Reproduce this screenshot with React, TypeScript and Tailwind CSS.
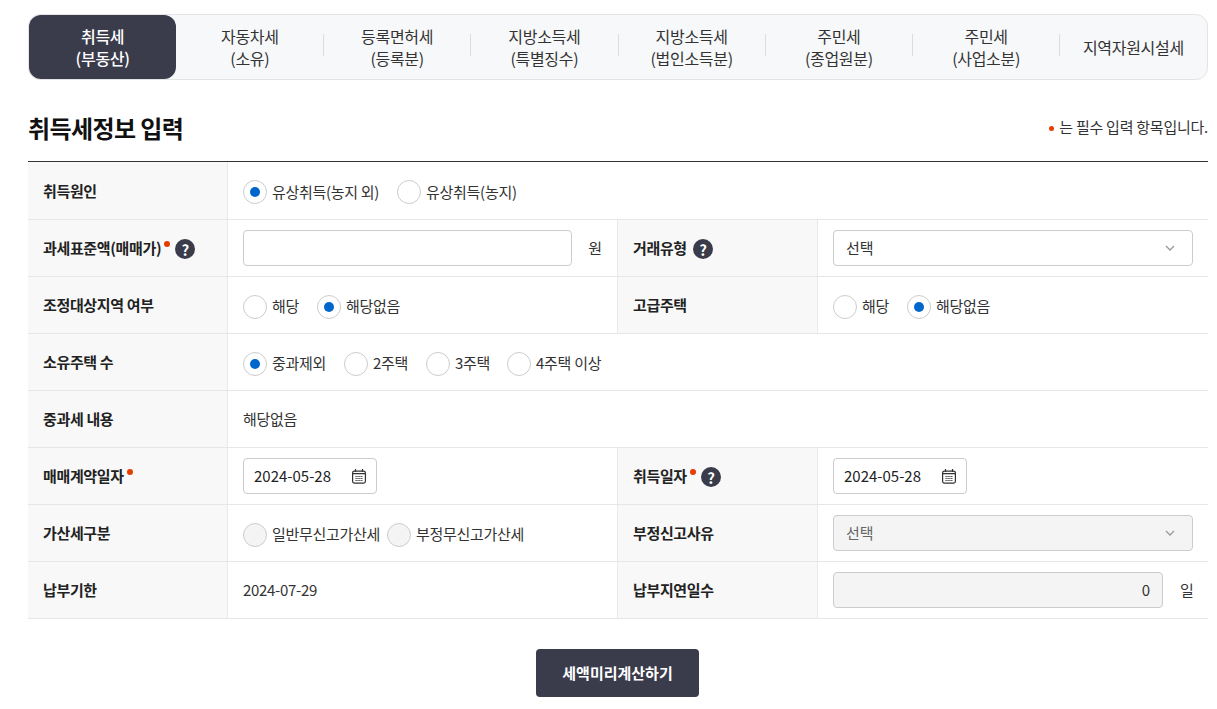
import React from "react";

const tabs: [string, string?][] = [
  ["취득세", "(부동산)"],
  ["자동차세", "(소유)"],
  ["등록면허세", "(등록분)"],
  ["지방소득세", "(특별징수)"],
  ["지방소득세", "(법인소득분)"],
  ["주민세", "(종업원분)"],
  ["주민세", "(사업소분)"],
  ["지역자원시설세"],
];

const Dot = () => <span className="mb-[9px] ml-[3px] mr-[-1px] inline-block h-[6px] w-[6px] rounded-full bg-[#e63c00]" />;

const Help = () => (
  <span className="ml-[6px] mt-[2px] flex h-5 w-5 items-center justify-center rounded-full bg-[#3a3c4b] text-[15px] font-bold leading-none text-white">?</span>
);

const Label = ({ first, children }: { first?: boolean; children: React.ReactNode }) => (
  <div className={`flex w-[200px] shrink-0 items-center border-r border-[#e9e9e9] bg-[#f8f8f8] pl-[15px] text-[15px] font-bold tracking-[-0.35px] text-[#222] ${first ? "pt-[2px]" : ""}`}>
    {children}
  </div>
);

const Row = ({ first, children }: { first?: boolean; children: React.ReactNode }) => (
  <div className={`flex border-b border-[#e6e6e6] ${first ? "h-[58px]" : "h-[57px]"}`}>{children}</div>
);

const Cell = ({ wide, last, children }: { wide?: boolean; last?: boolean; children: React.ReactNode }) => (
  <div className={`flex items-center pl-[15px] ${wide ? "flex-1" : last ? "w-[390px] pr-[15px]" : "w-[390px] border-r border-[#e9e9e9] pr-[15px]"}`}>
    {children}
  </div>
);

const Radio = ({ text, on, off, gap }: { text: string; on?: boolean; off?: boolean; gap: string }) => (
  <label className={`mt-[3px] flex items-center ${gap}`}>
    <span className={`mr-[5px] flex h-6 w-6 items-center justify-center rounded-full border border-[#ccc] ${off ? "bg-[#f4f4f4]" : "bg-white"}`}>
      {on && <span className="h-[10px] w-[10px] rounded-full bg-[#0066cc]" />}
    </span>
    <span className="text-[15px] tracking-[-0.3px] text-[#333]">{text}</span>
  </label>
);

const Chevron = () => (
  <svg width="10" height="6" viewBox="0 0 10 6" fill="none" className="mr-[17px]">
    <path d="M1 1l4 4 4-4" stroke="#999" strokeWidth="1.3" />
  </svg>
);

const Select = ({ off }: { off?: boolean }) => (
  <div className={`flex h-9 w-[360px] items-center justify-between rounded border border-[#ccc] pl-[12px] text-[15px] ${off ? "bg-[#f4f4f4] text-[#666]" : "bg-white text-[#333]"}`}>
    <span>선택</span>
    <Chevron />
  </div>
);

const DateBox = () => (
  <div className="flex h-9 w-[134px] items-center justify-between rounded border border-[#ccc] bg-white pl-[10px] pr-[10px] text-[15px] text-[#222]">
    <span>2024-05-28</span>
    <svg width="14" height="15" viewBox="0 0 14 15" fill="none">
      <rect x="0.6" y="2.1" width="12.8" height="12" rx="1.8" stroke="#333" strokeWidth="1.2" />
      <path d="M3.5 0v3M10.5 0v3M0.6 4.6h12.8" stroke="#333" strokeWidth="1.2" />
      <path d="M3.5 7.5h7M3.5 9.5h7M3.5 11.5h7" stroke="#333" strokeWidth="1.2" strokeDasharray="1.2 .7" />
    </svg>
  </div>
);

export default function App() {
  return (
    <div className="min-h-[709px] w-[1217px] bg-white pl-[28px] pr-[9px] pt-[14px] text-[#222]" style={{ fontFamily: '"Noto Sans CJK KR", "Noto Sans", sans-serif' }}>
      <div className="flex h-[66px] rounded-[12px] border border-[#e4e4e4] bg-[#f7f8fa]">
        {tabs.map((t, i) => (
          <div key={i} className="relative flex flex-1 flex-col items-center justify-center">
            {i === 0 ? (
              <div className="flex h-full w-full flex-col items-center justify-center rounded-[12px] bg-[#3a3b4b] text-[16px] font-medium leading-[22px] tracking-[-0.3px] text-white">
                <span>{t[0]}</span>
                <span>{t[1]}</span>
              </div>
            ) : (
              <div className="flex flex-col items-center text-[16px] leading-[22px] tracking-[-0.3px] text-[#333]">
                <span>{t[0]}</span>
                {t[1] && <span>{t[1]}</span>}
              </div>
            )}
            {i > 1 && <span className="absolute left-[-0.5px] top-[19px] h-[22px] w-px bg-[#ddd]" />}
          </div>
        ))}
      </div>

      <div className="flex h-[81px] items-center justify-between pt-[14px]">
        <h2 className="text-[24px] font-bold tracking-[-0.6px] text-[#111]">취득세정보 입력</h2>
        <div className="flex items-center text-[15px] tracking-[-0.25px] text-[#333]">
          <span className="mr-[5px] mt-[2px] h-[5px] w-[5px] rounded-full bg-[#e63c00]" />는 필수 입력 항목입니다.
        </div>
      </div>

      <div className="border-t border-[#333]">
        <Row first>
          <Label first>취득원인</Label>
          <Cell wide>
            <Radio on text="유상취득(농지 외)" gap="mr-[18px]" />
            <Radio text="유상취득(농지)" gap="" />
          </Cell>
        </Row>
        <Row>
          <Label>과세표준액(매매가)<Dot /><Help /></Label>
          <Cell>
            <div className="h-9 w-[330px] rounded border border-[#ccc] bg-white" />
            <span className="ml-[16px] text-[15px] text-[#333]">원</span>
          </Cell>
          <Label>거래유형<Help /></Label>
          <Cell last><Select /></Cell>
        </Row>
        <Row>
          <Label>조정대상지역 여부</Label>
          <Cell>
            <Radio text="해당" gap="mr-[18px]" />
            <Radio on text="해당없음" gap="" />
          </Cell>
          <Label>고급주택</Label>
          <Cell last>
            <Radio text="해당" gap="mr-[18px]" />
            <Radio on text="해당없음" gap="" />
          </Cell>
        </Row>
        <Row>
          <Label>소유주택 수</Label>
          <Cell wide>
            <Radio on text="중과제외" gap="mr-[18px]" />
            <Radio text="2주택" gap="mr-[18px]" />
            <Radio text="3주택" gap="mr-[17px]" />
            <Radio text="4주택 이상" gap="" />
          </Cell>
        </Row>
        <Row>
          <Label>중과세 내용</Label>
          <Cell wide><span className="text-[15px] tracking-[-0.3px] text-[#333]">해당없음</span></Cell>
        </Row>
        <Row>
          <Label>매매계약일자<Dot /></Label>
          <Cell><DateBox /></Cell>
          <Label>취득일자<Dot /><Help /></Label>
          <Cell last><DateBox /></Cell>
        </Row>
        <Row>
          <Label>가산세구분</Label>
          <Cell>
            <Radio off text="일반무신고가산세" gap="mr-[7px]" />
            <Radio off text="부정무신고가산세" gap="" />
          </Cell>
          <Label>부정신고사유</Label>
          <Cell last><Select off /></Cell>
        </Row>
        <Row>
          <Label>납부기한</Label>
          <Cell><span className="text-[15px] tracking-[-0.3px] text-[#333]">2024-07-29</span></Cell>
          <Label>납부지연일수</Label>
          <Cell last>
            <div className="flex h-9 w-[330px] shrink-0 items-center justify-end rounded border border-[#ccc] bg-[#f4f4f4] pr-[12px] text-[15px] text-[#333]">0</div>
            <span className="ml-[17px] text-[15px] text-[#333]">일</span>
          </Cell>
        </Row>
      </div>

      <div className="flex justify-center pr-[1px] pt-[30px]">
        <button className="h-12 w-[163px] rounded bg-[#3a3b4b] text-[15px] font-bold text-white">세액미리계산하기</button>
      </div>
    </div>
  );
}
